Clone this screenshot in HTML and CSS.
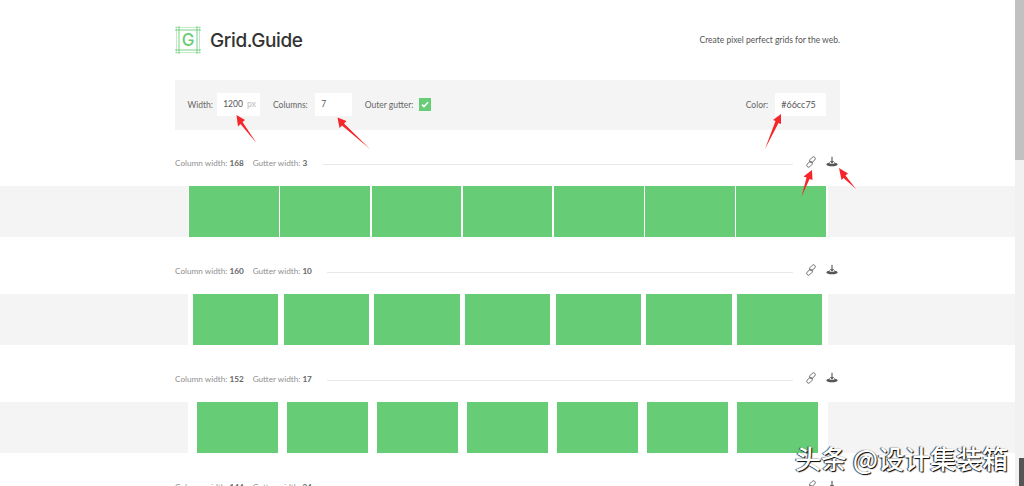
FILE: index.html
```html
<!DOCTYPE html>
<html>
<head>
  <title>Grid.Guide</title>
  <link rel="stylesheet" href="styles.css">
</head>
<body>
  <svg width="0" height="0" class="defs">
    <symbol id="icon-link" viewBox="0 0 12 12">
      <g fill="none" stroke="#666" stroke-width="0.9">
        <rect x="5.6" y="0.4" width="3.6" height="6.6" rx="1.8" transform="rotate(45 7.4 3.7)"/>
        <rect x="2.8" y="5" width="3.6" height="6.6" rx="1.8" transform="rotate(45 4.6 8.3)"/>
      </g>
    </symbol>
    <symbol id="icon-download" viewBox="0 0 12 12">
      <ellipse cx="6" cy="8.4" rx="5.6" ry="1.9" fill="#555"/>
      <path d="M3.2 7.4 C3.4 5.8 4.6 5.4 6 5.4 C7.4 5.4 8.6 5.8 8.8 7.4 C7.6 8.1 4.4 8.1 3.2 7.4 Z" fill="#fff" stroke="#666" stroke-width="0.6"/>
      <path d="M6 0.8 V6.8 M4.7 5.2 L6 6.8 L7.3 5.2" fill="none" stroke="#444" stroke-width="1"/>
    </symbol>
  </svg>

  <div class="window">
    <div class="page">
      <div class="wrap">
        <header class="top">
          <div class="brand">
            <svg class="logo" width="26" height="28" viewBox="0 0 26 28">
              <path d="M0 1.5 H26 M0 26.5 H26 M1.5 0 V28 M24.5 0 V28" stroke="#a5e0ad" stroke-width="0.7" fill="none"/>
              <path d="M0 4 H26 M0 24 H26 M4 0 V28 M22 0 V28" stroke="#66cc75" stroke-width="0.9" fill="none"/>
              <text x="13" y="19.8" text-anchor="middle" class="logo-g">G</text>
            </svg>
            <span class="brand-name">Grid.Guide</span>
          </div>
          <p class="tagline">Create pixel perfect grids for the web.</p>
        </header>

        <section class="panel">
          <label class="lbl">Width:</label>
          <div class="field field-width">1200 <span class="unit">px</span></div>
          <label class="lbl lbl-columns">Columns:</label>
          <div class="field field-columns">7</div>
          <label class="lbl lbl-gutter">Outer gutter:</label>
          <span class="check">
            <svg width="8" height="7" viewBox="0 0 8 7"><path d="M1 3.6 L3 5.5 L7 1.2" fill="none" stroke="#fff" stroke-width="1.6"/></svg>
          </span>
          <label class="lbl lbl-color">Color:</label>
          <div class="field field-color">#66cc75</div>
        </section>
      </div>

      <section class="result">
        <div class="wrap result-head">
          <span class="stat">Column width: <b>168</b></span>
          <span class="stat">Gutter width: <b>3</b></span>
          <span class="rule"></span>
          <svg class="ico"><use href="#icon-link"/></svg>
          <svg class="ico"><use href="#icon-download"/></svg>
        </div>
        <div class="strip">
          <div class="grid g3">
            <i></i><i></i><i></i><i></i><i></i><i></i><i></i>
          </div>
        </div>
      </section>

      <section class="result">
        <div class="wrap result-head">
          <span class="stat">Column width: <b>160</b></span>
          <span class="stat">Gutter width: <b>10</b></span>
          <span class="rule"></span>
          <svg class="ico"><use href="#icon-link"/></svg>
          <svg class="ico"><use href="#icon-download"/></svg>
        </div>
        <div class="strip">
          <div class="grid g10">
            <i></i><i></i><i></i><i></i><i></i><i></i><i></i>
          </div>
        </div>
      </section>

      <section class="result">
        <div class="wrap result-head">
          <span class="stat">Column width: <b>152</b></span>
          <span class="stat">Gutter width: <b>17</b></span>
          <span class="rule"></span>
          <svg class="ico"><use href="#icon-link"/></svg>
          <svg class="ico"><use href="#icon-download"/></svg>
        </div>
        <div class="strip">
          <div class="grid g17">
            <i></i><i></i><i></i><i></i><i></i><i></i><i></i>
          </div>
        </div>
      </section>

      <section class="result">
        <div class="wrap result-head">
          <span class="stat">Column width: <b>144</b></span>
          <span class="stat">Gutter width: <b>24</b></span>
          <span class="rule"></span>
          <svg class="ico"><use href="#icon-link"/></svg>
          <svg class="ico"><use href="#icon-download"/></svg>
        </div>
      </section>
    </div>

    <div class="scrollbar"><div class="thumb"></div></div>
  </div>

  <!-- arrows drawn on top of the screenshot -->
  <svg class="arrows" width="1024" height="486" viewBox="0 0 1024 486">
    <path class="arrow" d="M236.5 115 L245 120 L242.5 122 L256.5 143 L240.5 124 L238 126.5 Z"/>
    <path class="arrow" d="M337.5 117.5 L346.5 121 L344 123.5 L370 149 L342 125.5 L339.5 128 Z"/>
    <path class="arrow" d="M781 114 L781 124 L778.5 123 L765 149 L775.5 121 L773 120 Z"/>
    <path class="arrow" d="M812 170 L812.5 180 L809.5 179 L801.5 197 L806.5 177.5 L803.5 176.5 Z"/>
    <path class="arrow" d="M839 168 L848 173.5 L845.5 175.5 L856 189 L843.5 178 L841.5 180 Z"/>
  </svg>

  <div class="watermark">头条 @设计集装箱</div>
  <div class="corner"></div>
</body>
</html>
```

FILE: styles.css
```css
* {
  box-sizing: border-box;
}
html, body {
  margin: 0;
  height: 486px;
  overflow: hidden;
}
body {
  font-family: 'Lato', 'Liberation Sans', sans-serif;
  font-size: 8.5px;
  color: #666;
  background: #fff;
  position: relative;
}
.defs {
  display: block;
  height: 0;
}
.window {
  display: flex;
  height: 486px;
}
.page {
  flex: 1;
  overflow: hidden;
}
.wrap {
  margin-left: 175px;
  width: 665px;
}

/* header */
.top {
  display: flex;
  justify-content: space-between;
  align-items: center;
  height: 79.5px;
}
.brand {
  display: flex;
  align-items: center;
  gap: 9px;
}
.logo-g {
  font-family: 'Inter', sans-serif;
  font-size: 17px;
  font-weight: 500;
  fill: #66cc75;
}
.brand-name {
  font-family: 'Inter', sans-serif;
  font-size: 19px;
  font-weight: 500;
  line-height: 26px;
  padding-top: 2px;
  color: #333;
  letter-spacing: -0.4px;
}
.tagline {
  margin: 0;
  color: #555;
}

/* controls */
.panel {
  display: flex;
  align-items: center;
  height: 50px;
  padding: 0 14.3px 0 12.5px;
  background: #f4f4f4;
}
.field {
  height: 23.5px;
  line-height: 23.5px;
  background: #fff;
  color: #555;
  padding-left: 6.5px;
}
.field-width {
  width: 43px;
  margin-left: 3.7px;
}
.unit {
  color: #bbb;
  margin-left: 2px;
}
.field-columns {
  width: 37.5px;
  margin-left: 7px;
}
.field-color {
  width: 51px;
  margin-left: 6.5px;
  font-size: 9px;
}
.lbl-columns {
  margin-left: 13.3px;
}
.lbl-gutter {
  margin-left: 12.5px;
}
.lbl-color {
  margin-left: auto;
}
.check {
  display: flex;
  align-items: center;
  justify-content: center;
  width: 12.5px;
  height: 12.5px;
  margin-left: 5.5px;
  background: #66cc75;
}

/* results */
.result {
  height: 108px;
  padding-top: 22.5px;
}
.result-head {
  display: flex;
  align-items: center;
  height: 24px;
  margin-bottom: 10px;
  color: #8f8f8f;
  font-size: 8.2px;
}
.stat {
  margin-right: 9px;
  padding-bottom: 2px;
}
.stat b {
  color: #666;
  font-weight: 700;
}
.rule {
  flex: 1;
  height: 1px;
  margin: 1px 12px 0 6.5px;
  background: #e8e8e8;
}
.ico {
  width: 12px;
  height: 12px;
  position: relative;
  top: -2px;
}
.ico + .ico {
  margin-left: 9.5px;
  margin-right: 2px;
}
.strip {
  height: 51px;
  background: #f4f4f4;
  padding-left: 187.5px;
}
.grid {
  display: flex;
  width: 640px;
  height: 100%;
  background: #fff;
}
.grid i {
  flex: 1;
  background: #66cc75;
}
.g3 {
  padding: 0 1.6px;
  gap: 1.6px;
}
.g10 {
  padding: 0 5.33px;
  gap: 5.33px;
}
.g17 {
  padding: 0 9.07px;
  gap: 9.07px;
}

/* browser scrollbar */
.scrollbar {
  width: 9px;
  background: #f1f1f1;
}
.thumb {
  height: 160px;
  background: #c1c1c1;
}

/* overlays */
.arrows {
  position: absolute;
  left: 0;
  top: 0;
}
.arrow {
  fill: #f5262a;
}
.watermark {
  position: absolute;
  left: 795px;
  top: 439px;
  font-family: 'Noto Sans CJK SC', sans-serif;
  font-size: 26px;
  font-weight: 500;
  color: #fff;
  text-shadow: 1px 1px 1px #000, -1px 0 1px #333;
  white-space: nowrap;
}
.corner {
  position: absolute;
  right: 0;
  bottom: 0;
  width: 5px;
  height: 28px;
  background: #555;
}
```
